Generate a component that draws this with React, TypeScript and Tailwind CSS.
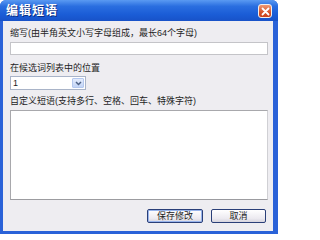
import React from "react";

export default function App() {
  const font = "font-['Liberation_Sans','Noto_Sans_CJK_SC',sans-serif]";
  return (
    <div className={`w-[278px] h-[234px] flex flex-col bg-[#2a62d8] rounded-t-[6px] overflow-hidden ${font}`}>
      {/* title bar */}
      <div className="h-[21px] shrink-0 flex items-center justify-between pl-[6px] pr-[6px] bg-[linear-gradient(to_bottom,#5a9af2_0%,#2a6ee0_30%,#1a5cd6_70%,#1852c8_100%)]">
        <span className="text-white font-bold text-[12px] leading-none tracking-[1px] [text-shadow:1px_1px_0_#0a2c80]">编辑短语</span>
        <div className="w-[14px] h-[14px] mt-[1px] rounded-[3px] border border-[#f4f0ee] bg-[linear-gradient(to_bottom,#f09a74,#d6542a_60%,#c8421c)] flex items-center justify-center">
          <svg width="9" height="9" viewBox="0 0 9 9">
            <path d="M1.5 1.5 L7.5 7.5 M7.5 1.5 L1.5 7.5" stroke="white" strokeWidth="1.8" strokeLinecap="round" />
          </svg>
        </div>
      </div>
      {/* body */}
      <div className="flex-1 ml-[3px] mr-[5px] mb-[3px] bg-[#eeedf1] flex flex-col pl-[7px] pr-0 pt-[6px] text-[9px] text-[#1e1e1e]">
        <div className="h-[12px] leading-[12px] whitespace-nowrap">缩写(由半角英文小写字母组成，最长64个字母)</div>
        <div className="mt-[3px] h-[13px] w-[258px] bg-white border border-[#c4c4c8]" />
        <div className="mt-[7px] h-[12px] leading-[12px] whitespace-nowrap">在候选词列表中的位置</div>
        <div className="mt-[2px] h-[14px] w-[76px] bg-white border border-[#a9b4c8] flex items-stretch">
          <div className="flex-1 pl-[2px] leading-[12px] text-[9px]">1</div>
          <div className="w-[12px] m-[1px] rounded-[1px] border border-[#b4c8ee] bg-[linear-gradient(to_bottom,#e4ecfc,#c2d4f6)] flex items-center justify-center">
            <svg width="7" height="5" viewBox="0 0 7 5">
              <path d="M1 1 L3.5 3.5 L6 1" stroke="#4d6185" strokeWidth="1.5" fill="none" />
            </svg>
          </div>
        </div>
        <div className="mt-[5px] h-[12px] leading-[12px] whitespace-nowrap">自定义短语(支持多行、空格、回车、特殊字符)</div>
        <div className="mt-[3px] h-[90px] w-[258px] bg-white border border-t-[#a8a8ac] border-l-[#a8a8ac] border-r-[#d0d0d4] border-b-[#9c9ca0]" />
        <div className="mt-[9px] flex justify-end gap-[8px] pr-[7px]">
          <button className="w-[56px] h-[14px] rounded-[2px] border border-[#2a3f78] bg-[linear-gradient(to_bottom,#ffffff,#eceaf0_70%,#d6d4de)] shadow-[inset_0_0_0_1px_#98b4ec] text-[9px] leading-[12px] text-[#1e1e1e]">保存修改</button>
          <button className="w-[55px] h-[14px] rounded-[2px] border border-[#2a3f78] bg-[linear-gradient(to_bottom,#ffffff,#eceaf0_70%,#d6d4de)] text-[9px] leading-[12px] text-[#1e1e1e]">取消</button>
        </div>
      </div>
    </div>
  );
}
